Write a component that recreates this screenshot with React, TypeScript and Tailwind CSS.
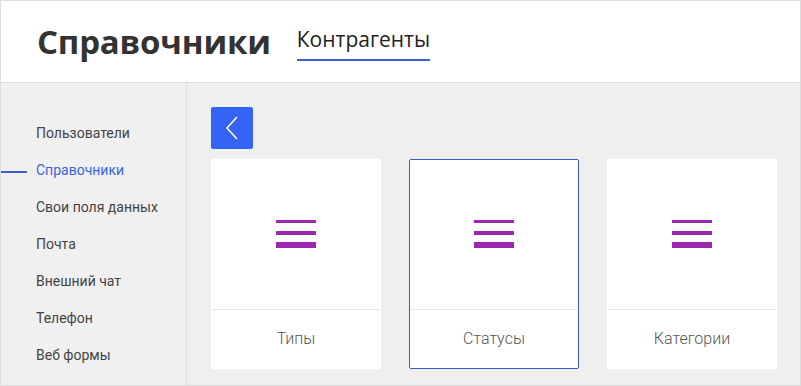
import React from 'react';

const menu = [
  'Пользователи',
  'Справочники',
  'Свои поля данных',
  'Почта',
  'Внешний чат',
  'Телефон',
  'Веб формы',
];

const cards = ['Типы', 'Статусы', 'Категории'];

const ListIcon: React.FC = () => (
  <svg width="40" height="30" viewBox="0 0 40 30">
    <rect x="0" y="0" width="40" height="3" fill="#9c27b0" />
    <rect x="0" y="11" width="40" height="4" fill="#9c27b0" />
    <rect x="0" y="22" width="40" height="6" fill="#9c27b0" />
  </svg>
);

export default function App() {
  return (
    <div className="w-[801px] h-[386px] border border-[#dcdcdc] flex flex-col bg-[#efefef] overflow-hidden">
      {/* Header */}
      <div className="h-[82px] shrink-0 bg-white border-b border-[#dcdcdc] flex items-center pl-[36px]">
        <h1
          className="text-[33px] font-bold text-[#333] leading-none"
          style={{ fontFamily: '"Open Sans", sans-serif', letterSpacing: '-0.2px' }}
        >
          Справочники
        </h1>
        <div className="ml-[26px] mt-[6px] border-b-2 border-[#3a5fd0] pb-[6px]">
          <span
            className="text-[21px] text-[#222] leading-none"
            style={{ fontFamily: '"Open Sans", sans-serif' }}
          >
            Контрагенты
          </span>
        </div>
      </div>

      <div className="flex flex-1 min-h-0">
        {/* Sidebar */}
        <div
          className="w-[186px] shrink-0 border-r border-[#dcdcdc] bg-[#f0f0f0] pt-[32px]"
          style={{ fontFamily: 'Roboto, sans-serif' }}
        >
          {menu.map((item, i) => (
            <div key={item} className="relative h-[37px] flex items-center pl-[35px] text-[14px]">
              {i === 1 && <div className="absolute left-0 top-1/2 w-[26px] h-[2px] bg-[#3a5fd0]" />}
              <span className={i === 1 ? 'text-[#3a63dd]' : 'text-[#444]'}>{item}</span>
            </div>
          ))}
        </div>

        {/* Content */}
        <div className="flex-1 pl-[24px] pt-[24px]">
          <button className="w-[42px] h-[42px] bg-[#3364f5] rounded-[2px] flex items-center justify-center">
            <svg width="14" height="24" viewBox="0 0 14 24" fill="none">
              <path d="M12 1L2 12l10 11" stroke="white" strokeWidth="1.6" />
            </svg>
          </button>
          <div className="flex gap-[28px] mt-[10px]" style={{ fontFamily: 'Roboto, sans-serif' }}>
            {cards.map((c, i) => (
              <div
                key={c}
                className={`w-[170px] h-[210px] bg-white border rounded-[2px] flex flex-col ${
                  i === 1 ? 'border-[#3d5bc4]' : 'border-transparent'
                }`}
              >
                <div className="h-[150px] flex items-center justify-center border-b border-[#e8e8e8]">
                  <ListIcon />
                </div>
                <div className="flex-1 flex items-center justify-center text-[16px] font-light text-[#555]">
                  {c}
                </div>
              </div>
            ))}
          </div>
        </div>
      </div>
    </div>
  );
}
